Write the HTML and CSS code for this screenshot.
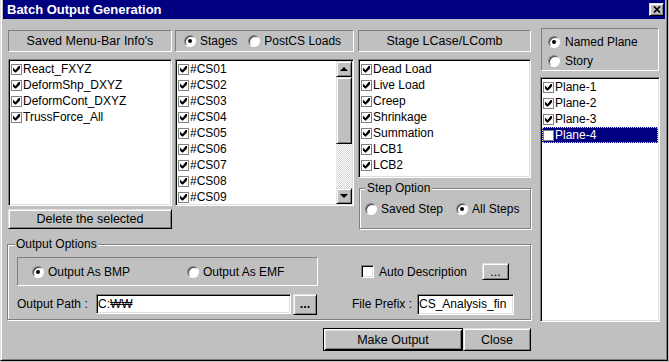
FILE: index.html
```html
<!DOCTYPE html>
<html>
<head>
    <link rel="stylesheet" href="styles.css">
</head>
<body>
<div class="window">
    <div class="titlebar">
        <span class="title">Batch Output Generation</span>
        <button class="close raised">
            <svg width="8" height="7" viewBox="0 0 8 7"><path d="M1 0.5l6 6M7 0.5l-6 6" stroke="#000" stroke-width="1.7"/></svg>
        </button>
    </div>
    <div class="client">
        <div class="left">
            <div class="top">
                <div class="c1">
                    <div class="caption">Saved Menu-Bar Info's</div>
                    <div class="list">
                        <div class="item"><span class="cb on"></span>React_FXYZ</div>
                        <div class="item"><span class="cb on"></span>DeformShp_DXYZ</div>
                        <div class="item"><span class="cb on"></span>DeformCont_DXYZ</div>
                        <div class="item"><span class="cb on"></span>TrussForce_All</div>
                    </div>
                    <button class="btn delete">Delete the selected</button>
                </div>
                <div class="c2">
                    <div class="caption choice">
                        <span class="opt"><span class="radio on"></span>Stages</span>
                        <span class="opt"><span class="radio"></span>PostCS Loads</span>
                    </div>
                    <div class="list scrolled">
                        <div class="items">
                            <div class="item"><span class="cb on"></span>#CS01</div>
                            <div class="item"><span class="cb on"></span>#CS02</div>
                            <div class="item"><span class="cb on"></span>#CS03</div>
                            <div class="item"><span class="cb on"></span>#CS04</div>
                            <div class="item"><span class="cb on"></span>#CS05</div>
                            <div class="item"><span class="cb on"></span>#CS06</div>
                            <div class="item"><span class="cb on"></span>#CS07</div>
                            <div class="item"><span class="cb on"></span>#CS08</div>
                            <div class="item"><span class="cb on"></span>#CS09</div>
                        </div>
                        <div class="scroll">
                            <div class="sb-btn raised"><span class="arrow-up"></span></div>
                            <div class="thumb raised"></div>
                            <div class="track"></div>
                            <div class="sb-btn raised"><span class="arrow-down"></span></div>
                        </div>
                    </div>
                </div>
                <div class="c3">
                    <div class="caption">Stage LCase/LComb</div>
                    <div class="list">
                        <div class="item"><span class="cb on"></span>Dead Load</div>
                        <div class="item"><span class="cb on"></span>Live Load</div>
                        <div class="item"><span class="cb on"></span>Creep</div>
                        <div class="item"><span class="cb on"></span>Shrinkage</div>
                        <div class="item"><span class="cb on"></span>Summation</div>
                        <div class="item"><span class="cb on"></span>LCB1</div>
                        <div class="item"><span class="cb on"></span>LCB2</div>
                    </div>
                    <fieldset class="group step">
                        <legend>Step Option</legend>
                        <div class="row">
                            <span class="opt"><span class="radio"></span>Saved Step</span>
                            <span class="opt"><span class="radio on"></span>All Steps</span>
                        </div>
                    </fieldset>
                </div>
            </div>

            <fieldset class="group output">
                <legend>Output Options</legend>
                <div class="grid">
                    <div class="radiobox">
                        <span class="opt"><span class="radio on"></span>Output As BMP</span>
                        <span class="opt"><span class="radio"></span>Output As EMF</span>
                    </div>
                    <div class="auto">
                        <span class="check"></span>Auto Description
                        <button class="btn dots small">...</button>
                    </div>
                    <div class="path">
                        <label>Output Path :</label>
                        <input class="edit" type="text" value="C:₩₩">
                        <button class="btn dots">...</button>
                    </div>
                    <div class="prefix">
                        <label>File Prefix :</label>
                        <input class="edit" type="text" value="CS_Analysis_fin">
                    </div>
                </div>
            </fieldset>

            <div class="actions">
                <button class="btn default make">Make Output</button>
                <button class="btn closebtn">Close</button>
            </div>
        </div>

        <div class="right">
            <div class="optbox">
                <span class="opt"><span class="radio on"></span>Named Plane</span>
                <span class="opt"><span class="radio"></span>Story</span>
            </div>
            <div class="list">
                <div class="item"><span class="cb on"></span>Plane-1</div>
                <div class="item"><span class="cb on"></span>Plane-2</div>
                <div class="item"><span class="cb on"></span>Plane-3</div>
                <div class="item sel"><span class="cb"></span>Plane-4</div>
            </div>
        </div>
    </div>
</div>
</body>
</html>
```

FILE: styles.css
```css
* { box-sizing: border-box; }

body {
    margin: 0;
    background: #c0c0c0;
    font-family: "Liberation Sans", Arial, sans-serif;
    font-size: 12px;
    color: #000;
}

.window {
    width: 668px;
    height: 361px;
    padding: 0 2px 2px;
    border: 1px solid #000;
    border-top: 0;
    border-left-color: #dfdfdf;
    box-shadow: inset 1px 0 #fff, inset -1px -1px #808080;
}

/* title bar */
.titlebar {
    height: 19px;
    background: #000080;
    color: #fff;
    display: flex;
    align-items: center;
    justify-content: space-between;
    padding: 0 1px 0 4px;
}
.title { font-weight: bold; font-size: 13px; }
.close {
    width: 15px;
    height: 13px;
    padding: 0;
    display: flex;
    align-items: center;
    justify-content: center;
}

/* win98 bevels */
.raised, .btn {
    background: #c0c0c0;
    border: 1px solid;
    border-color: #dfdfdf #000 #000 #dfdfdf;
    box-shadow: inset 1px 1px #fff, inset -1px -1px #808080;
}
.btn {
    font: inherit;
    font-size: 12.5px;
    color: #000;
    padding: 0;
}
.btn.default {
    border-color: #000;
    box-shadow: inset 1px 1px #fff, inset -1px -1px #000, inset 2px 2px #dfdfdf, inset -2px -2px #808080;
}

.client {
    display: flex;
    gap: 9px;
    padding: 9px 5px 0 4px;
}
.left { width: 524px; }
.right { width: 120px; }

.top {
    display: flex;
    margin: 2px 0 0 1px;
}
.c1 { width: 164px; }
.c2 { width: 179px; margin-left: 3px; }
.c3 { width: 173px; margin-left: 4px; }

.caption {
    height: 22px;
    display: flex;
    align-items: center;
    justify-content: center;
    border: 1px solid;
    border-color: #808080 #fff #fff #808080;
    white-space: nowrap;
    font-size: 12.5px;
}
.caption.choice {
    justify-content: flex-start;
    padding-left: 8px;
    gap: 11px;
    font-size: 12px;
}

/* list boxes */
.list {
    margin-top: 7px;
    background: #fff;
    border: 1px solid;
    border-color: #808080 #fff #fff #808080;
    box-shadow: inset 1px 1px #000, inset -1px -1px #dfdfdf;
    padding: 1px;
    overflow: hidden;
}
.c1 .list, .c2 .list { height: 147px; }
.c3 .list { height: 119px; }
.right .list { height: 245px; margin-top: 6px; }

.item {
    display: flex;
    align-items: center;
    height: 16px;
    padding-left: 1px;
    white-space: nowrap;
}
.item.sel {
    background: #000080;
    color: #fff;
    outline: 1px dotted #e0e0a0;
    outline-offset: -1px;
}

.cb {
    flex: none;
    width: 11px;
    height: 11px;
    margin-right: 1px;
    border: 1px solid #808080;
    background: #fff;
    display: flex;
    align-items: center;
    justify-content: center;
}
.cb.on::before {
    content: '';
    width: 7px;
    height: 7px;
    background: #000;
    clip-path: polygon(0 2px, 2.5px 4.5px, 6px 0, 7px 0, 7px 3px, 3px 7px, 2px 7px, 0 5px);
}

.check {
    flex: none;
    width: 13px;
    height: 13px;
    margin-right: 5px;
    background: #fff;
    border: 1px solid;
    border-color: #808080 #fff #fff #808080;
    box-shadow: inset 1px 1px #000, inset -1px -1px #dfdfdf;
}

.opt {
    display: flex;
    align-items: center;
    white-space: nowrap;
}
.radio {
    flex: none;
    width: 12px;
    height: 12px;
    margin-right: 4px;
    border-radius: 50%;
    background: #fff;
    border: 1px solid;
    border-color: #808080 #fff #fff #808080;
    box-shadow: inset 1px 1px #404040;
    display: flex;
    align-items: center;
    justify-content: center;
}
.radio.on::before {
    content: '';
    width: 4px;
    height: 4px;
    border-radius: 50%;
    background: #000;
}

/* scrollbar */
.list.scrolled { display: flex; }
.items { flex: 1; }
.scroll {
    flex: none;
    width: 16px;
    display: flex;
    flex-direction: column;
    background: repeating-conic-gradient(#fff 0 25%, #d4d4d4 0 50%) 0 0 / 2px 2px;
}
.sb-btn {
    height: 16px;
    display: flex;
    align-items: center;
    justify-content: center;
}
.thumb { height: 67px; }
.track { flex: 1; }
.arrow-up, .arrow-down {
    width: 0;
    height: 0;
    border-left: 4px solid transparent;
    border-right: 4px solid transparent;
}
.arrow-up { border-bottom: 4px solid #000; }
.arrow-down { border-top: 4px solid #000; }

.delete {
    display: block;
    width: 100%;
    height: 20px;
    margin-top: 3px;
}

/* group boxes */
.group {
    margin: 0;
    min-width: 0;
    border: 1px solid #808080;
    box-shadow: inset 1px 1px #fff, 1px 1px #fff;
}
.group legend {
    padding: 0 2px;
    line-height: 14px;
    background: #c0c0c0;
}
.step {
    margin: 3px 0 0 1px;
    padding: 7px 5px 12px;
}
.step .row {
    display: flex;
    align-items: center;
    height: 14px;
}
.step .opt + .opt { margin-left: 13px; }

.output {
    margin-top: 8px;
    padding: 6px 16px 4px 9px;
}
.output legend {
    margin-left: -2px;
    padding: 0 1px;
}
.grid {
    display: grid;
    grid-template-columns: 301px 1fr;
    grid-template-rows: 29px 22px;
    row-gap: 7px;
}
.radiobox {
    display: flex;
    align-items: center;
    padding-left: 14px;
    border: 1px solid;
    border-color: #808080 #fff #fff #808080;
}
.radiobox .opt:first-child { width: 155px; }

.auto {
    display: flex;
    align-items: center;
    justify-content: flex-end;
    margin-right: 5px;
}
.dots {
    width: 24px;
    height: 21px;
    margin-left: 2px;
    font-weight: bold;
    line-height: 12px;
}
.dots.small {
    width: 27px;
    height: 17px;
    margin-left: 15px;
    font-weight: normal;
}

.path, .prefix {
    display: flex;
    align-items: center;
}
.path label { width: 79px; }
.prefix {
    justify-content: flex-end;
    gap: 5px;
}
.edit {
    height: 20px;
    font: inherit;
    color: #000;
    background: #fff;
    border: 1px solid;
    border-color: #808080 #fff #fff #808080;
    box-shadow: inset 1px 1px #000, inset -1px -1px #dfdfdf;
    padding: 0 0 0 1px;
    outline: none;
}
.path .edit { width: 195px; }
.prefix .edit { width: 97px; height: 21px; }

.actions {
    display: flex;
    justify-content: flex-end;
    margin-top: 8px;
}
.make { width: 140px; height: 23px; }
.closebtn { width: 68px; height: 23px; }

/* right column */
.optbox {
    height: 43px;
    margin: 0 1px;
    padding: 3px 0 0 6px;
    border: 1px solid;
    border-color: #808080 #fff #fff #808080;
}
.optbox .opt { height: 19px; }
.optbox .radio { margin-right: 5px; }
```
